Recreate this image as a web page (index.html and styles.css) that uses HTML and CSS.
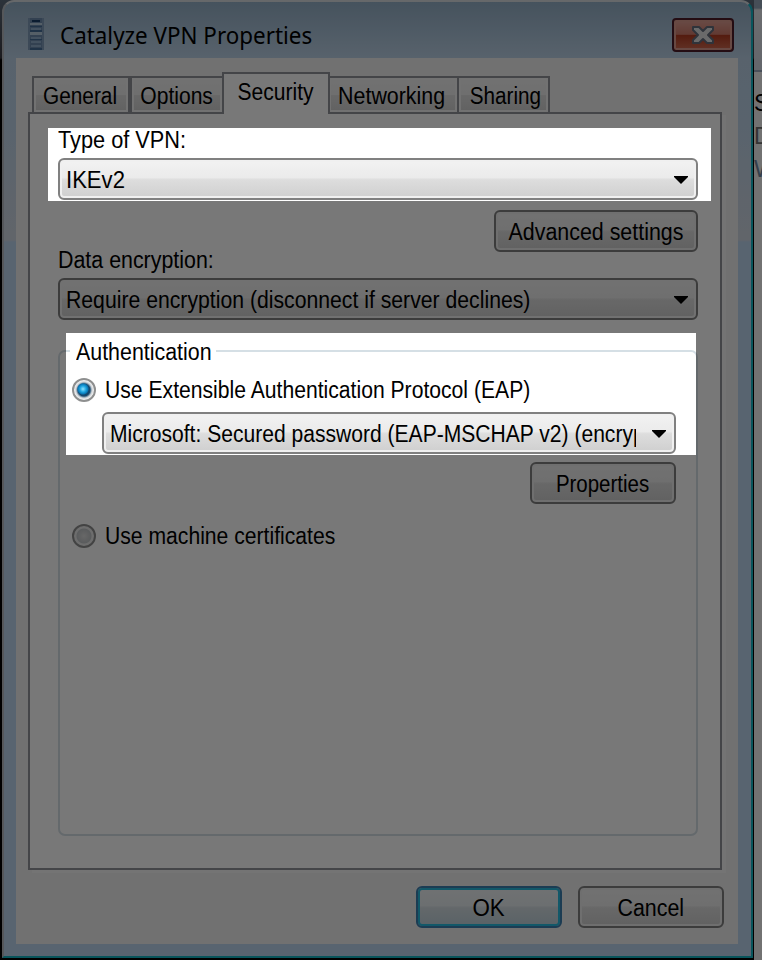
FILE: index.html
```html
<!DOCTYPE html>
<html lang="en">
<head>
<meta charset="utf-8">
<title>Catalyze VPN Properties</title>
<link rel="stylesheet" href="styles.css">
</head>
<body>
<div class="screen">
  <main class="window">
    <header class="titlebar">
      <svg class="app-icon" width="16" height="32" viewBox="0 0 16 32">
        <rect width="16" height="32" fill="#6d8bad"/>
        <path d="M0 0H2V32H0ZM14 0H16V32H14Z" fill="#7f9cb9"/>
        <path d="M4 2H12V4H4Z" fill="#193d66"/>
        <path d="M2 5H14V7H2ZM2 14H14V17H2Z" fill="#b5c9dc"/>
        <path d="M3 10H13V12H3ZM3 19H13V21H3ZM3 23H13V25H3ZM3 27H13V29H3Z" fill="#8fadca"/>
        <path d="M2 8H14V9H2ZM2 12H14V14H2ZM2 21H14V22H2ZM2 30H14V32H2Z" fill="#456d98"/>
      </svg>
      <h1><span class="t-title">Catalyze VPN Properties</span></h1>
      <button class="close" aria-label="Close">
        <svg width="24" height="20" viewBox="0 0 24 20"><path d="M2 2H8L12 6L16 2H22V5L17 10L22 15V18H16L12 14L8 18H2V15L7 10L2 5Z" fill="#e2e2e2" stroke="#646c7c" stroke-width="2" stroke-linejoin="round"/></svg>
      </button>
    </header>
    <div class="client">
      <nav class="tabs">
        <div class="tab general"><span class="t-general">General</span></div>
        <div class="tab options"><span class="t-options">Options</span></div>
        <div class="tab active"><span class="t-security">Security</span></div>
        <div class="tab networking"><span class="t-networking">Networking</span></div>
        <div class="tab sharing"><span class="t-sharing">Sharing</span></div>
      </nav>
      <section class="panel">
        <div class="label"><span class="t-type">Type of VPN:</span></div>
        <div class="select"><div class="value"><span class="t-ike">IKEv2</span></div><svg class="arrow" width="14" height="8" viewBox="0 0 14 8"><path d="M0 0H14V1L7 8L0 1Z"/></svg></div>
        <div class="button advanced"><span class="t-adv">Advanced settings</span></div>
        <div class="label data"><span class="t-data">Data encryption:</span></div>
        <div class="select"><div class="value"><span class="t-req">Require encryption (disconnect if server declines)</span></div><svg class="arrow" width="14" height="8" viewBox="0 0 14 8"><path d="M0 0H14V1L7 8L0 1Z"/></svg></div>
        <div class="group">
          <div class="legend"><span class="t-auth">Authentication</span></div>
          <div class="radio-row"><i class="radio checked"></i><span class="t-eap">Use Extensible Authentication Protocol (EAP)</span></div>
          <div class="select method"><div class="value"><span class="t-ms">Microsoft: Secured password (EAP-MSCHAP v2) (encryp</span></div><svg class="arrow" width="14" height="8" viewBox="0 0 14 8"><path d="M0 0H14V1L7 8L0 1Z"/></svg></div>
          <div class="button props"><span class="t-props">Properties</span></div>
          <div class="radio-row machine"><i class="radio"></i><span class="t-cert">Use machine certificates</span></div>
        </div>
      </section>
      <footer class="actions">
        <div class="button ok"><span class="t-ok">OK</span></div>
        <div class="button"><span class="t-cancel">Cancel</span></div>
      </footer>
    </div>
  </main>
  <aside class="behind">
    <div class="behind-bar"></div>
    <div class="behind-line dark">S</div>
    <div class="behind-line">D</div>
    <div class="behind-line blue">W</div>
  </aside>
  <div class="dim"></div>
</div>
</body>
</html>
```
FILE: styles.css
```css
* { box-sizing: border-box; }
body { margin: 0; }
.screen {
  position: relative;
  display: flex;
  width: 762px;
  height: 960px;
  overflow: hidden;
  background: linear-gradient(#5e6c7c 0, #3a3a42 58px, #000 60px);
  font: 23px/28px "Liberation Sans", sans-serif;
  color: #000;
}

/* Condensed text, scaled from its left edge or, in tabs and buttons, its centre. */
span { display: inline-block; white-space: nowrap; transform-origin: 0 50%; transform: scaleX(.922); }
.tab span, .button span { flex: none; transform-origin: 50% 50%; }
.t-title { transform: scaleX(.933); }
.t-general { transform: scaleX(.905) translateX(-1px); }
.t-options { transform: scaleX(.915); }
.t-security { transform: scaleX(.915); }
.t-networking { transform: scaleX(.93) translateX(-1px); }
.t-sharing { transform: scaleX(.9) translateX(2px); }
.t-type { transform: scaleX(.945); }
.t-ike { transform: scaleX(.96); }
.t-adv, .t-data, .t-auth, .t-cancel { transform: scaleX(.93); }
.t-props { transform: scaleX(.89) translateX(-1px); }
.t-ok { transform: scaleX(.97); }
.t-eap, .t-cert { transform: scaleX(.919); }
.t-ms { transform: scaleX(.916); }

.window {
  flex: none;
  width: 751px;
  height: 958px;
  margin-left: 2px;
  padding: 0 12px 12px;
  border: 2px solid #d8dde2;
  border-left-color: #b4bac0;
  border-right-color: #12b4c4;
  border-bottom-color: #12b4c4;
  border-radius: 12px 12px 0 0;
  background: linear-gradient(#94afc6 0, #bbd1e6 56px, #bdd3e8 120px, #ced6e2 230px, #ced6e2 238px, #bbd5ee 240px);
}
.titlebar {
  display: flex;
  align-items: flex-start;
  height: 56px;
}
.app-icon { margin: 16px 0 0 12px; }
h1 {
  flex: 1;
  margin: 17px 0 0 16px;
  font: 24px/32px "Noto Sans", sans-serif;
}
.close {
  display: flex;
  align-items: center;
  justify-content: center;
  width: 62px;
  height: 34px;
  margin: 16px 5px 0 0;
  padding: 0;
  border: 2px solid #4e1c29;
  border-radius: 4px;
  box-shadow: inset 0 0 0 2px #dc9c8f;
  background: linear-gradient(#e0a196, #cf7b6c 48%, #b23a20 50%, #cf6b50);
}
.client {
  width: 722px;
  height: 886px;
  padding: 14px 14px 0 12px;
  background: #f0f0f0;
}
.tabs {
  display: flex;
  align-items: flex-end;
  height: 40px;
  padding-left: 4px;
}
.tab {
  display: flex;
  flex: none;
  justify-content: center;
  height: 36px;
  padding-top: 4px;
  border: 2px solid #90929a;
  border-bottom: 0;
  background: linear-gradient(#f2f2f2, #ebebeb 49%, #dddddd 51%, #cfcfcf);
  box-shadow: inset 0 0 0 2px #f3f3f3;
}
.general { width: 98px; }
.options { width: 94px; }
.active {
  position: relative;
  z-index: 1;
  width: 108px;
  height: 42px;
  margin: 0 -1px -2px -2px;
  background: #fff;
  box-shadow: none;
}
.networking { width: 130px; border-left: 0; }
.sharing { width: 91px; border-left: 0; }
.panel {
  width: 694px;
  height: 758px;
  padding: 12px 22px 0 28px;
  border: 2px solid #90929a;
  background: #fff;
  box-shadow: 4px 3px 0 #f7f7f7;
}
.label { height: 28px; margin-bottom: 4px; }
.select {
  display: flex;
  align-items: center;
  width: 640px;
  height: 42px;
  padding: 0 8px 0 6px;
  border: 2px solid #808080;
  border-radius: 6px;
  background: linear-gradient(#f2f2f2, #ebebeb 46%, #dddddd 52%, #cfcfcf);
  box-shadow: inset 0 0 0 2px #f0f0f0;
}
.value { flex: 1; height: 30px; overflow: hidden; line-height: 32px; }
.arrow { flex: none; margin-top: 2px; }
.button {
  display: flex;
  flex: none;
  align-items: center;
  justify-content: center;
  width: 146px;
  height: 42px;
  padding-top: 2px;
  border: 2px solid #808080;
  border-radius: 6px;
  background: linear-gradient(#f2f2f2, #ebebeb 46%, #dddddd 52%, #cfcfcf);
  box-shadow: inset 0 0 0 2px #ebebeb;
}
.advanced { width: 204px; margin: 10px 0 0 436px; }
.data { margin-top: -6px; }
.group {
  width: 640px;
  height: 486px;
  margin-top: 30px;
  border: 2px solid #d5dfe5;
  border-radius: 7px;
}
.legend {
  width: 146px;
  height: 28px;
  margin: -14px 0 0 10px;
  padding-left: 6px;
  background: #fff;
}
.radio-row { display: flex; align-items: center; gap: 9px; height: 28px; margin: 10px 0 0 12px; }
.radio {
  width: 24px;
  height: 24px;
  border: 2px solid #8e8f8f;
  border-radius: 50%;
  background: radial-gradient(circle at 10px 10px, #dcdcdc 0, #bfc3c6 7px, #e8e8e8 8px);
}
.checked { background: radial-gradient(circle at 9px 9px, #8fe3ff 0, #20a5e0 3px, #0876b4 5px, transparent 6px), radial-gradient(circle at 10px 10px, #123f66 0, #16476c 6px, #d0d4d8 8px, #f8f8f8 10px); }
.method { width: 574px; margin: 8px 0 0 42px; }
.method .value { flex: 0 0 526px; margin-right: 16px; }
.props { margin: 8px 0 0 470px; }
.machine { margin-top: 18px; }
.actions { display: flex; gap: 16px; margin: 16px 0 0 388px; }
.ok {
  border-color: #3c7fb1;
  background: linear-gradient(#edf2f4, #e5ebef 46%, #d4dde2 52%, #bdd0da);
  box-shadow: inset 0 0 0 2px #27bbdf;
}
.behind { width: 8px; height: 960px; margin-left: 1px; overflow: hidden; background: #f2f2f2; }
.behind-bar { height: 72px; margin-bottom: 14px; border-bottom: 2px solid #9caac0; background: linear-gradient(#96a7b9 0, #96a7b9 8px, #e6e8ed 10px, #d4dae5); }
.behind-line { height: 33px; line-height: 34px; color: #707070; }
.behind-line.dark { color: #000; }
.behind-line.blue { color: #7287a0; }

/* Shade over the whole screen with two windows left clear. */
.dim {
  position: absolute;
  inset: 0;
  z-index: 2;
  background: rgba(0, 0, 0, .53);
  clip-path: path(evenodd, "M0 0H762V960H0Z M48 128H711V201H48Z M66 333H696V455H66Z");
}
```
